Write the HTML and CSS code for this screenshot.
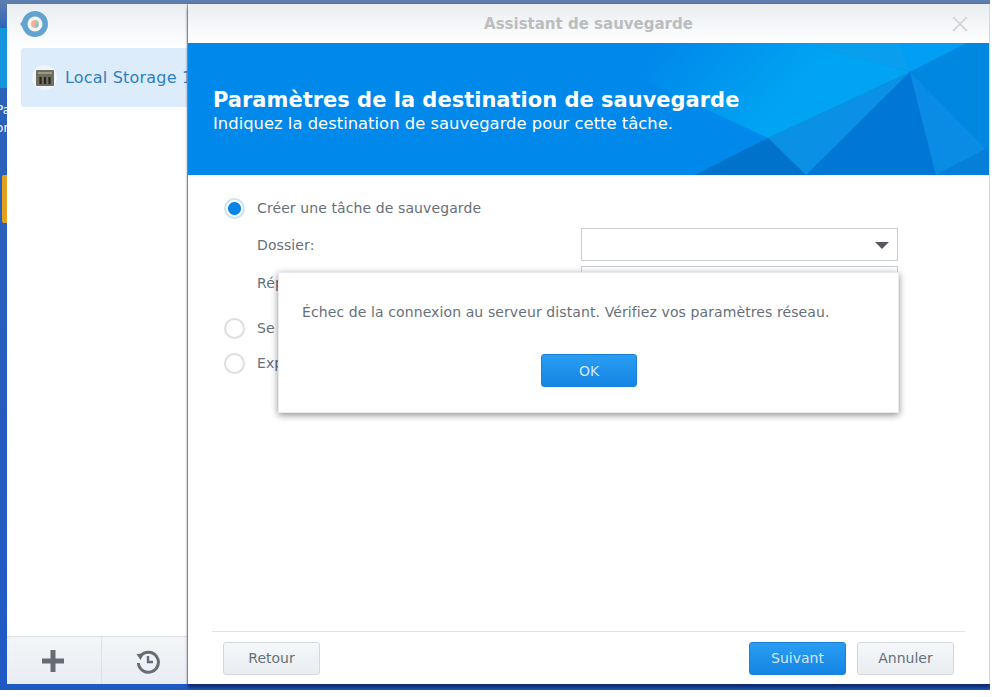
FILE: index.html
```html
<!DOCTYPE html>
<html lang="fr">
<head>
  <meta charset="UTF-8">
  <title>Assistant de sauvegarde</title>
  <link rel="stylesheet" href="styles.css">
</head>
<body>

  <div class="desktop">
    <!-- bits of the desktop behind the windows -->
    <div class="desk-band"></div>
    <div class="desk-text">Pa<br>or</div>
    <div class="desk-note"></div>

    <div class="app">
      <aside class="sidebar">
        <div class="sidebar-head">
          <svg class="logo" width="30" height="28" viewBox="0 0 30 28">
            <circle cx="16" cy="14" r="13" fill="#62a4cf"/>
            <path d="M1 14 L6 8 L6 20 Z" fill="#62a4cf"/>
            <circle cx="16" cy="14" r="7.5" fill="#f6f5f2"/>
            <path d="M16 14 L16 10 A4 4 0 0 1 20 14 Z" fill="#a5cf96"/>
            <path d="M16 14 L20 14 A4 4 0 0 1 16 18 Z" fill="#8fbfe0"/>
            <path d="M16 14 L16 18 A4 4 0 0 1 12 14 A4 4 0 0 1 16 10 Z" fill="#efb29c"/>
          </svg>
        </div>
        <div class="task">
          <span class="task-icon">
            <svg width="18" height="16" viewBox="0 0 18 16">
              <rect width="18" height="16" rx="1" fill="#6f6f60"/>
              <path d="M2 3 H16" stroke="#a8a892" stroke-width="1.5"/>
              <path d="M4.5 7 V14 M9 7 V14 M13.5 7 V14" stroke="#26261f" stroke-width="2.2"/>
            </svg>
          </span>
          <span class="task-name">Local Storage 1</span>
        </div>
        <div class="sidebar-foot">
          <button class="foot-btn">
            <svg width="26" height="26" viewBox="0 0 26 26">
              <path d="M13 2 V24 M2 13 H24" stroke="#666c72" stroke-width="5"/>
            </svg>
          </button>
          <button class="foot-btn">
            <svg width="26" height="26" viewBox="0 0 26 26" fill="none" stroke="#666c72">
              <path d="M5.6 8 A10 10 0 1 1 3.4 15" stroke-width="3"/>
              <path d="M1.5 6 L9 5.5 L5.5 12 Z" fill="#666c72" stroke="none"/>
              <path d="M13 8 V14 H18" stroke-width="2.4"/>
            </svg>
          </button>
        </div>
      </aside>

      <main class="wizard">
        <header class="titlebar">
          <span class="title">Assistant de sauvegarde</span>
          <svg class="close" width="16" height="16" viewBox="0 0 16 16">
            <path d="M1 1 L15 15 M15 1 L1 15" stroke="#d6d8da" stroke-width="2"/>
          </svg>
        </header>

        <section class="banner">
          <svg class="banner-art" width="802" height="132" viewBox="0 0 802 132">
            <defs>
              <linearGradient id="glow" gradientUnits="userSpaceOnUse" x1="470" y1="0" x2="570" y2="90">
                <stop offset="0" stop-color="#0088ea"/>
                <stop offset="1" stop-color="#00a4f3"/>
              </linearGradient>
            </defs>
            <polygon points="380,0 617,0 722,29 580,95 392,7" fill="url(#glow)"/>
            <polygon points="617,0 712,0 722,29" fill="#0a9fee"/>
            <polygon points="712,0 779,0 722,29" fill="#009ff5"/>
            <polygon points="722,29 779,0 801,0 801,110" fill="#0088e0"/>
            <polygon points="580,95 722,29 618,132" fill="#0a90e4"/>
            <polygon points="618,132 722,29 748,132" fill="#0077d4"/>
            <polygon points="722,29 801,110 801,132 748,132" fill="#0a8ce4"/>
            <polygon points="507,132 580,95 618,132" fill="#0072cc"/>
            <polygon points="748,132 801,104 801,132" fill="#057fd8"/>
          </svg>
          <h1>Paramètres de la destination de sauvegarde</h1>
          <p>Indiquez la destination de sauvegarde pour cette tâche.</p>
        </section>

        <form class="form">
          <div class="row">
            <span class="radio checked"></span>
            <span>Créer une tâche de sauvegarde</span>
          </div>
          <div class="field first">
            <span>Dossier:</span>
            <span class="select"><span class="caret"></span></span>
          </div>
          <div class="field second">
            <span>Répertoire:</span>
            <span class="select"></span>
          </div>
          <div class="row third">
            <span class="radio"></span>
            <span>Se relier à une tâche existante</span>
          </div>
          <div class="row fourth">
            <span class="radio"></span>
            <span>Exporter vers un dossier</span>
          </div>
        </form>

        <footer class="actions">
          <button class="btn">Retour</button>
          <span class="spacer"></span>
          <button class="btn primary">Suivant</button>
          <button class="btn">Annuler</button>
        </footer>
      </main>
    </div>

    <div class="dialog">
      <p>Échec de la connexion au serveur distant. Vérifiez vos paramètres réseau.</p>
      <button class="btn primary ok">OK</button>
    </div>
  </div>

</body>
</html>
```

FILE: styles.css
```css
* {
  box-sizing: border-box;
}

body {
  margin: 0;
  background-color: #fff;
  font-family: 'DejaVu Sans', sans-serif;
  color: #66707a;
  font-size: 14px;
  letter-spacing: 0.1px;
  overflow: hidden;
}

.desktop {
  position: relative;
  width: 990px;
  height: 690px;
  padding: 4px 0 6px 7px;
  background: linear-gradient(#5f7fae 0, #2c62b8 30px, #1f5ac4 100%);
  overflow: hidden;
}

.desk-band {
  position: absolute;
  left: 0;
  top: 28px;
  width: 7px;
  height: 60px;
  background-color: #1596dc;
}

.desk-text {
  position: absolute;
  left: -4px;
  top: 101px;
  color: #fff;
  font-size: 12px;
  line-height: 18px;
}

.desk-note {
  position: absolute;
  left: 2px;
  top: 175px;
  width: 5px;
  height: 48px;
  background-color: #e0a21f;
  border-radius: 2px 0 0 2px;
}

.app {
  position: relative;
  z-index: 1;
  display: flex;
  height: 100%;
  background-color: #fff;
}

/* left panel */
.sidebar {
  position: relative;
  width: 181px;
  display: flex;
  flex-direction: column;
  background-color: #fff;
  border-right: 1px solid #b5b8bb;
  overflow: hidden;
}

.sidebar-head {
  height: 44px;
  padding: 6px 0 0 12px;
  background: linear-gradient(#e9edf1, #fff);
}

.logo {
  display: block;
}

.task {
  display: flex;
  align-items: center;
  height: 59px;
  margin-left: 14px;
  padding-left: 11px;
  background-color: #dcecfb;
  border-radius: 3px 0 0 3px;
  white-space: nowrap;
}

.task-icon {
  width: 25px;
  height: 25px;
  display: flex;
  align-items: center;
  justify-content: center;
  background-color: #eef5fb;
  border-radius: 50%;
  flex: none;
}

.task-name {
  margin-left: 8px;
  color: #2f7fc0;
  font-size: 16px;
  letter-spacing: 0.2px;
}

.sidebar-foot {
  display: flex;
  height: 48px;
  margin-top: auto;
  background: linear-gradient(#f3f5f7, #e9eef3);
  border-top: 1px solid #d8dde2;
}

.foot-btn {
  flex: 1;
  display: flex;
  align-items: center;
  justify-content: center;
  padding: 0 2px 0 0;
  background: none;
  border: none;
}

.foot-btn + .foot-btn {
  border-left: 1px solid #dfe3e7;
  flex: 0 0 86px;
  padding: 0 0 0 6px;
}

/* wizard window */
.wizard {
  flex: 1;
  display: flex;
  flex-direction: column;
  background-color: #fff;
  border-right: 1px solid #d4d6d8;
  box-shadow: -1px 0 2px rgba(0, 0, 0, 0.15), 0 4px 3px rgba(0, 0, 40, 0.5);
  z-index: 1;
}

.titlebar {
  position: relative;
  height: 39px;
  flex: none;
  display: flex;
  align-items: center;
  justify-content: center;
  background: linear-gradient(#e9edf1, #fff);
}

.title {
  font-size: 15px;
  font-weight: bold;
  letter-spacing: 0;
  color: #bbbdbf;
}

.close {
  position: absolute;
  right: 21px;
  top: 12px;
}

.banner {
  position: relative;
  height: 132px;
  flex: none;
  padding: 45px 0 0 25px;
  background-color: #0088ea;
  color: #fff;
  overflow: hidden;
}

.banner-art {
  position: absolute;
  left: 0;
  top: 0;
}

.banner h1,
.banner p {
  position: relative;
  margin: 0;
}

.banner h1 {
  font-size: 21px;
  line-height: 25px;
  font-weight: bold;
  letter-spacing: 0;
}

.banner p {
  font-size: 16.4px;
  line-height: 22px;
  letter-spacing: 0;
}

.form {
  flex: 1;
  padding: 22px 0 0 36px;
}

.row {
  display: flex;
  align-items: center;
  gap: 12px;
  height: 22px;
}

.radio {
  width: 21px;
  height: 21px;
  border: 2px solid #dcdee0;
  border-radius: 50%;
  background-color: #fff;
  flex: none;
}

.radio.checked {
  border-color: #cfe3f5;
  background: radial-gradient(circle, #0a84e6 0 6px, #fff 7px);
}

.field {
  display: flex;
  align-items: center;
  justify-content: space-between;
  width: 674px;
  padding-left: 33px;
  height: 33px;
}

.first {
  margin-top: 9px;
}

.second {
  margin-top: 5px;
}

.third {
  margin-top: 18px;
}

.fourth {
  margin-top: 13px;
}

.select {
  position: relative;
  width: 317px;
  height: 33px;
  background-color: #fff;
  border: 1px solid #c9cdd1;
  flex: none;
}

.caret {
  position: absolute;
  right: 8px;
  top: 13px;
  border-top: 7px solid #55585f;
  border-left: 7px solid transparent;
  border-right: 7px solid transparent;
}

.actions {
  display: flex;
  align-items: center;
  gap: 11px;
  height: 53px;
  margin: 0 24px 0 24px;
  padding: 0 11px;
  border-top: 1px solid #dfe2e5;
  flex: none;
}

.spacer {
  flex: 1;
}

.btn {
  width: 97px;
  height: 33px;
  padding: 0;
  font-family: inherit;
  font-size: 14px;
  color: #66707a;
  background: linear-gradient(#f5f7f9, #e9edf1);
  border: 1px solid #d3d8dc;
  border-radius: 3px;
}

.btn.primary {
  color: #cfe8fb;
  background: linear-gradient(#2a9df2, #1485e4);
  border-color: #1a82d8;
}

/* message box over the wizard */
.dialog {
  position: absolute;
  left: 278px;
  top: 272px;
  width: 621px;
  height: 141px;
  padding: 31px 0 0 23px;
  background-color: #fff;
  border: 1px solid #e9eaeb;
  box-shadow: 0 2px 7px rgba(0, 0, 0, 0.45);
  z-index: 2;
}

.dialog p {
  margin: 0;
  line-height: 17px;
}

.ok {
  display: block;
  width: 96px;
  margin: 33px 0 0 239px;
}
```
